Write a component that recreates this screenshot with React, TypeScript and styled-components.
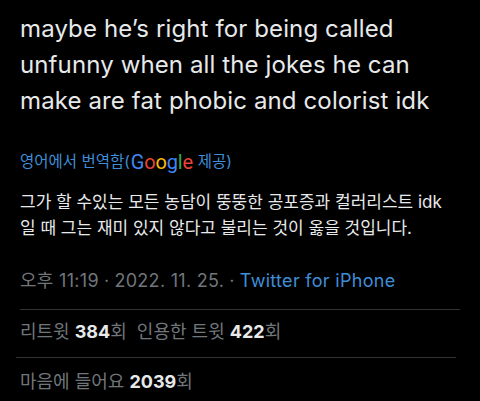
import styled, { createGlobalStyle } from "styled-components";

const GlobalStyle = createGlobalStyle`
  html, body {
    margin: 0;
    padding: 0;
    background: #000;
  }
  body {
    font-family: Inter, "Noto Sans CJK KR", sans-serif;
    -webkit-font-smoothing: antialiased;
  }
`;

const textFont = `Inter, "Noto Sans CJK KR", sans-serif`;

const Page = styled.div`
  width: 480px;
  height: 401px;
  overflow: hidden;
  background: #000;
  padding: 0 20px;
  box-sizing: border-box;
  display: flex;
  flex-direction: column;
`;

const TweetText = styled.p`
  margin: 11px 0 0;
  font-family: ${textFont};
  font-size: 24px;
  line-height: 36px;
  color: #e7e9ea;
  letter-spacing: 0.12px;
`;

const TranslateLabel = styled.div`
  margin-top: 32px;
  font-family: ${textFont};
  font-size: 15.5px;
  line-height: 22px;
  color: #3f8ed8;
  display: flex;
  align-items: center;
`;

const GoogleWord = styled.span`
  font-family: Roboto, "Open Sans", sans-serif;
  font-size: 20px;
  font-weight: 400;
  letter-spacing: -0.2px;
  margin: 0 5px 0 1px;
`;

const Letter = styled.span<{ c: string }>`
  color: ${(p) => p.c};
`;

const Translation = styled.p`
  margin: 16px 0 0;
  font-family: ${textFont};
  font-size: 17px;
  line-height: 26px;
  color: #e7e9ea;
`;

const Meta = styled.div`
  margin-top: 29px;
  font-family: ${textFont};
  font-size: 18px;
  line-height: 22px;
  letter-spacing: 0.3px;
  color: #71767b;
  display: flex;
  gap: 5px;
`;

const Source = styled.span`
  color: #3f8ed8;
`;

const Divider = styled.hr<{ top: number; inset?: number }>`
  margin: ${(p) => p.top}px 0 0 0;
  border: none;
  height: 1px;
  background: #2f3336;
  margin-right: ${(p) => p.inset ?? 0}px;
  margin-left: ${(p) => -(p.inset ?? 0)}px;
`;

const StatRow = styled.div<{ top: number }>`
  margin-top: ${(p) => p.top}px;
  font-family: ${textFont};
  font-size: 18px;
  line-height: 22px;
  color: #71767b;
  display: flex;
  gap: 10px;
`;

const Stat = styled.span``;

const Num = styled.b`
  color: #e7e9ea;
  font-weight: 700;
`;

const googleColors = [
  ["G", "#4285f4"],
  ["o", "#ea4335"],
  ["o", "#fbbc05"],
  ["g", "#4285f4"],
  ["l", "#34a853"],
  ["e", "#ea4335"],
];

export default function App() {
  return (
    <>
      <GlobalStyle />
      <Page>
        <TweetText>
          maybe he’s right for being called
          <br />
          unfunny when all the jokes he can
          <br />
          make are fat phobic and colorist idk
        </TweetText>
        <TranslateLabel>
          영어에서 번역함(
          <GoogleWord>
            {googleColors.map(([l, c], i) => (
              <Letter key={i} c={c}>
                {l}
              </Letter>
            ))}
          </GoogleWord>
          제공)
        </TranslateLabel>
        <Translation>
          그가 할 수있는 모든 농담이 뚱뚱한 공포증과 컬러리스트 idk
          <br />
          일 때 그는 재미 있지 않다고 불리는 것이 옳을 것입니다.
        </Translation>
        <Meta>
          <span>오후 11:19</span>
          <span>·</span>
          <span>2022. 11. 25.</span>
          <span>·</span>
          <Source>Twitter for iPhone</Source>
        </Meta>
        <Divider top={17} />
        <StatRow top={11}>
          <Stat>
            리트윗 <Num>384</Num>회
          </Stat>
          <Stat>
            인용한 트윗 <Num>422</Num>회
          </Stat>
        </StatRow>
        <Divider top={14} inset={4} />
        <StatRow top={13}>
          <Stat>
            마음에 들어요 <Num>2039</Num>회
          </Stat>
        </StatRow>
      </Page>
    </>
  );
}
